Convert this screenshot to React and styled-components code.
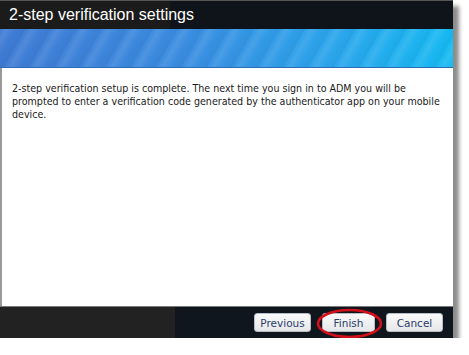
import React from 'react'
import styled, { createGlobalStyle } from 'styled-components'

const GlobalStyle = createGlobalStyle`
  html, body {
    margin: 0;
    padding: 0;
    background: #ffffff;
  }
`

const Dialog = styled.div`
  position: relative;
  display: flex;
  flex-direction: column;
  width: 453px;
  height: 338px;
  background: #ffffff;
  box-shadow: 6px 6px 4px rgba(0, 0, 0, 0.45);
`

const TitleBar = styled.div`
  height: 29px;
  display: flex;
  align-items: center;
  padding-left: 9px;
  background: linear-gradient(90deg, #1b1b1b 0, #1b1b1b 170px, #0f141b 170px, #0f141b 100%);
  border-top: 1px solid #555;
  box-sizing: border-box;
`

const Title = styled.h1`
  margin: 0;
  font-family: "Liberation Sans", Arial, sans-serif;
  font-weight: normal;
  font-size: 16px;
  color: #ffffff;
`

const Banner = styled.div`
  height: 38px;
  background:
    repeating-linear-gradient(120deg, rgba(255,255,255,0) 0, rgba(255,255,255,0.1) 6px, rgba(255,255,255,0) 14px, rgba(0,0,0,0.04) 22px),
    linear-gradient(90deg, #3f7bd4 0%, #3a8ce0 40%, #2aa6ec 75%, #16baf2 100%);
  border-bottom: 1px solid #2a6cb8;
`

const Content = styled.div`
  flex: 1;
  padding: 14px 8px 0 10px;
  border-left: 2px solid #9a9a9a;
  font-family: "DejaVu Sans Condensed", "DejaVu Sans", Verdana, sans-serif;
  font-stretch: condensed;
  font-size: 10.6px;
  line-height: 13px;
  color: #1a1a1a;
`

const Footer = styled.div`
  height: 31px;
  display: flex;
  align-items: center;
  justify-content: flex-end;
  gap: 11px;
  padding-right: 10px;
  background: linear-gradient(90deg, #222222 0, #222222 175px, #0f161d 175px, #0f161d 100%);
  border-top: 1px solid #7a7a7a;
`

const Button = styled.button`
  position: relative;
  height: 19px;
  width: ${p => p.w}px;
  padding: 0;
  border: 1px solid #b8bcc4;
  border-radius: 3px;
  background: linear-gradient(180deg, #fafafa 0%, #e6e7ea 100%);
  font-family: "DejaVu Sans", Verdana, sans-serif;
  font-size: 10.5px;
  color: #2b3b6b;
`

const Ring = styled.svg`
  position: absolute;
  left: -7px;
  top: -6px;
  width: ${p => p.w + 14}px;
  height: 31px;
  pointer-events: none;
`

export default function App() {
  return (
    <>
      <GlobalStyle />
      <Dialog>
        <TitleBar>
          <Title>2-step verification settings</Title>
        </TitleBar>
        <Banner />
        <Content>
          2-step verification setup is complete. The next time you sign in to ADM you will be
          prompted to enter a verification code generated by the authenticator app on your mobile
          device.
        </Content>
        <Footer>
          <Button w={57}>Previous</Button>
          <Button w={53}>
            Finish
            <Ring w={53} viewBox="0 0 67 31">
              <ellipse cx="33.5" cy="15.5" rx="31.5" ry="13.5" fill="none" stroke="#d4101a" strokeWidth="2.6" />
            </Ring>
          </Button>
          <Button w={57}>Cancel</Button>
        </Footer>
      </Dialog>
    </>
  )
}
